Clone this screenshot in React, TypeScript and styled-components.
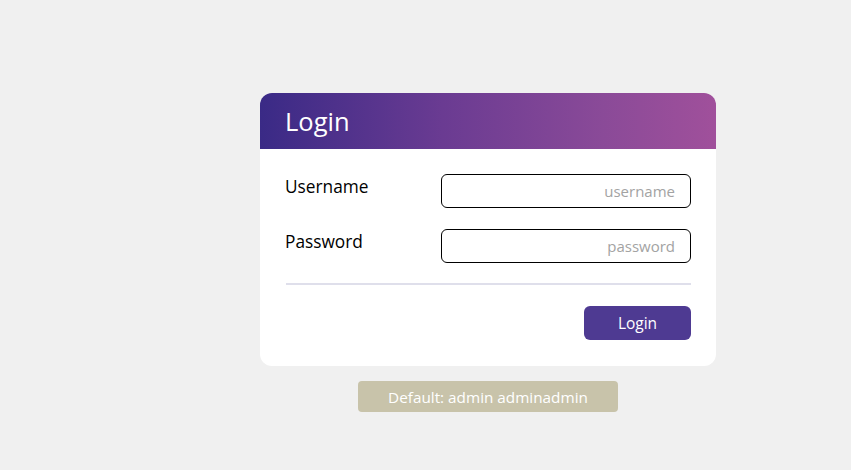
import React from 'react';
import styled, { createGlobalStyle } from 'styled-components';

const GlobalStyle = createGlobalStyle`
  html, body {
    margin: 0;
    padding: 0;
    background: #f0f0f0;
    font-family: "Open Sans", "Noto Sans", "Liberation Sans", sans-serif;
  }
`;

const Page = styled.div`
  width: 851px;
  height: 470px;
  box-sizing: border-box;
  padding: 93px 0 0 260px;
  display: flex;
  flex-direction: column;
`;

const Column = styled.div`
  width: 456px;
  display: flex;
  flex-direction: column;
  align-items: center;
  gap: 15px;
`;

const Card = styled.div`
  width: 100%;
  background: #ffffff;
  border-radius: 12px;
  overflow: hidden;
`;

const Header = styled.div`
  height: 56px;
  box-sizing: border-box;
  padding: 0 25px;
  display: flex;
  align-items: center;
  background: linear-gradient(90deg, #3a2a86 0%, #6a3b92 40%, #8a4a98 75%, #a0509b 100%);
  color: #ffffff;
  font-size: 25.5px;
`;

const Body = styled.div`
  padding: 25px 25px 26px 26px;
  display: flex;
  flex-direction: column;
`;

const Row = styled.div`
  display: flex;
  align-items: flex-start;
  justify-content: space-between;
  margin-bottom: 21px;
`;

const Label = styled.label`
  font-size: 17.3px;
  color: #000000;
  line-height: 26px;
  margin-left: -1px;
`;

const Input = styled.input`
  width: 250px;
  height: 34px;
  box-sizing: border-box;
  border: 1px solid #000000;
  border-radius: 6px;
  padding: 0 15px;
  text-align: right;
  font-family: inherit;
  font-size: 15px;
  outline: none;
  &::placeholder {
    color: #a3a3a3;
  }
`;

const Divider = styled.hr`
  margin: -1px 0 21px 0;
  border: none;
  height: 2px;
  background: #dfdfeb;
`;

const Actions = styled.div`
  display: flex;
  justify-content: flex-end;
`;

const Button = styled.button`
  width: 107px;
  height: 34px;
  border: none;
  border-radius: 6px;
  background: #4e3a92;
  color: #ffffff;
  font-family: inherit;
  font-size: 15.5px;
  cursor: pointer;
`;

const Hint = styled.div`
  width: 260px;
  height: 31px;
  display: flex;
  align-items: center;
  justify-content: center;
  background: #c8c3aa;
  border-radius: 4px;
  color: #ffffff;
  font-size: 15.3px;
`;

export default function App() {
  return (
    <>
      <GlobalStyle />
      <Page>
        <Column>
          <Card>
            <Header>Login</Header>
            <Body>
              <Row>
                <Label htmlFor="username">Username</Label>
                <Input id="username" type="text" placeholder="username" />
              </Row>
              <Row>
                <Label htmlFor="password">Password</Label>
                <Input id="password" type="password" placeholder="password" />
              </Row>
              <Divider />
              <Actions>
                <Button type="button">Login</Button>
              </Actions>
            </Body>
          </Card>
          <Hint>Default: admin adminadmin</Hint>
        </Column>
      </Page>
    </>
  );
}
